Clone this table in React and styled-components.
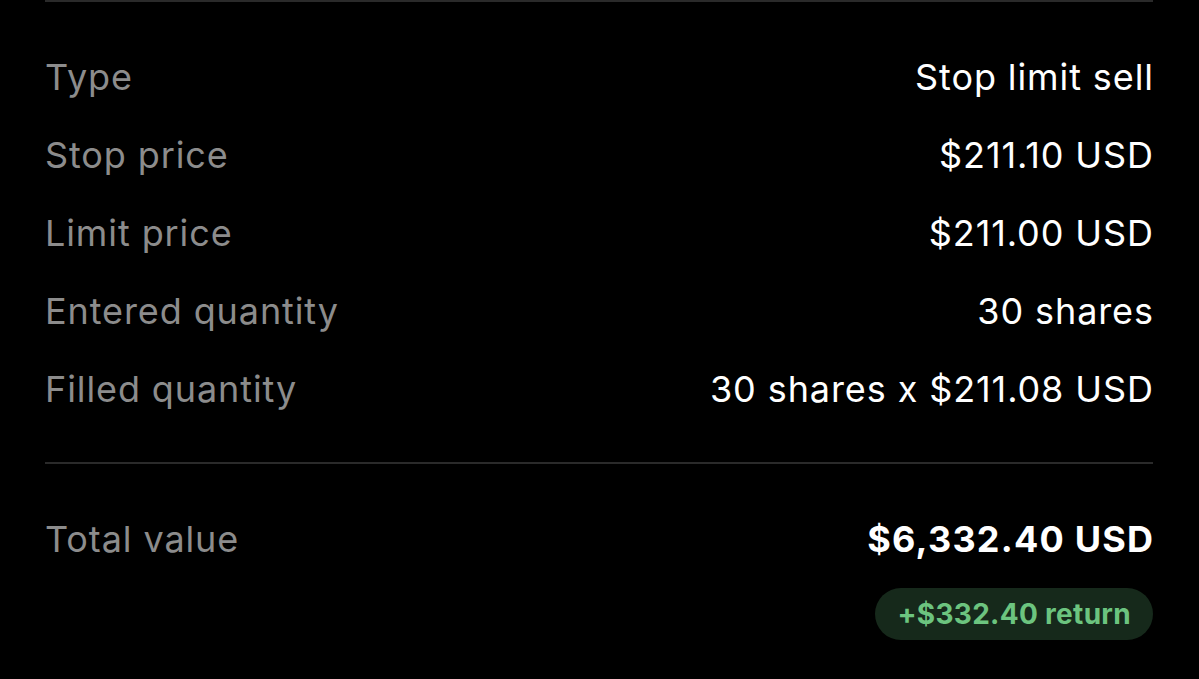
import React from "react";
import styled, { createGlobalStyle } from "styled-components";

const GlobalStyle = createGlobalStyle`
  html, body {
    margin: 0;
    padding: 0;
    background: #000;
  }
  body {
    font-family: Inter, "Liberation Sans", sans-serif;
    -webkit-font-smoothing: antialiased;
  }
`;

const details = [
  { label: "Type", value: "Stop limit sell" },
  { label: "Stop price", value: "$211.10 USD" },
  { label: "Limit price", value: "$211.00 USD" },
  { label: "Entered quantity", value: "30 shares" },
  { label: "Filled quantity", value: "30 shares x $211.08 USD" },
];

const App = () => {
  return (
    <>
      <GlobalStyle />
      <Page>
        <Section>
          <DetailList>
            {details.map((row) => (
              <DetailRow key={row.label}>
                <Label>{row.label}</Label>
                <Value>{row.value}</Value>
              </DetailRow>
            ))}
          </DetailList>
        </Section>
        <TotalSection>
          <DetailRow>
            <Label>Total value</Label>
            <Value $bold>$6,332.40 USD</Value>
          </DetailRow>
          <ReturnPill>+$332.40 return</ReturnPill>
        </TotalSection>
      </Page>
    </>
  );
};

const Page = styled.div`
  width: 1199px;
  height: 679px;
  background: #000;
  padding: 0 46px 0 45px;
  box-sizing: border-box;
  overflow: hidden;
`;

const Section = styled.div`
  border-top: 2px solid #2a2a2a;
  border-bottom: 2px solid #2a2a2a;
  padding: 36px 0 34px;
`;

const DetailList = styled.div`
  display: flex;
  flex-direction: column;
`;

const DetailRow = styled.div`
  display: flex;
  justify-content: space-between;
  align-items: center;
  height: 78px;
`;

const Label = styled.span`
  color: #8c8c8c;
  font-size: 36px;
  font-weight: 400;
  letter-spacing: 0.9px;
`;

const Value = styled.span`
  color: #fff;
  font-size: 36px;
  font-weight: ${(p) => (p.$bold ? 700 : 400)};
  letter-spacing: ${(p) => (p.$bold ? "1.2px" : "0.9px")};
  margin-right: ${(p) => (p.$bold ? "-1.2px" : "-0.9px")};
`;

const TotalSection = styled.div`
  display: flex;
  flex-direction: column;
  align-items: stretch;
  padding-top: 36px;
`;

const ReturnPill = styled.div`
  align-self: flex-end;
  margin-top: 10px;
  height: 52px;
  padding: 0 22px;
  border-radius: 26px;
  background: #16291b;
  color: #6cc47f;
  font-size: 28px;
  font-weight: 700;
  letter-spacing: 0.3px;
  display: flex;
  align-items: center;
`;

export default App;
